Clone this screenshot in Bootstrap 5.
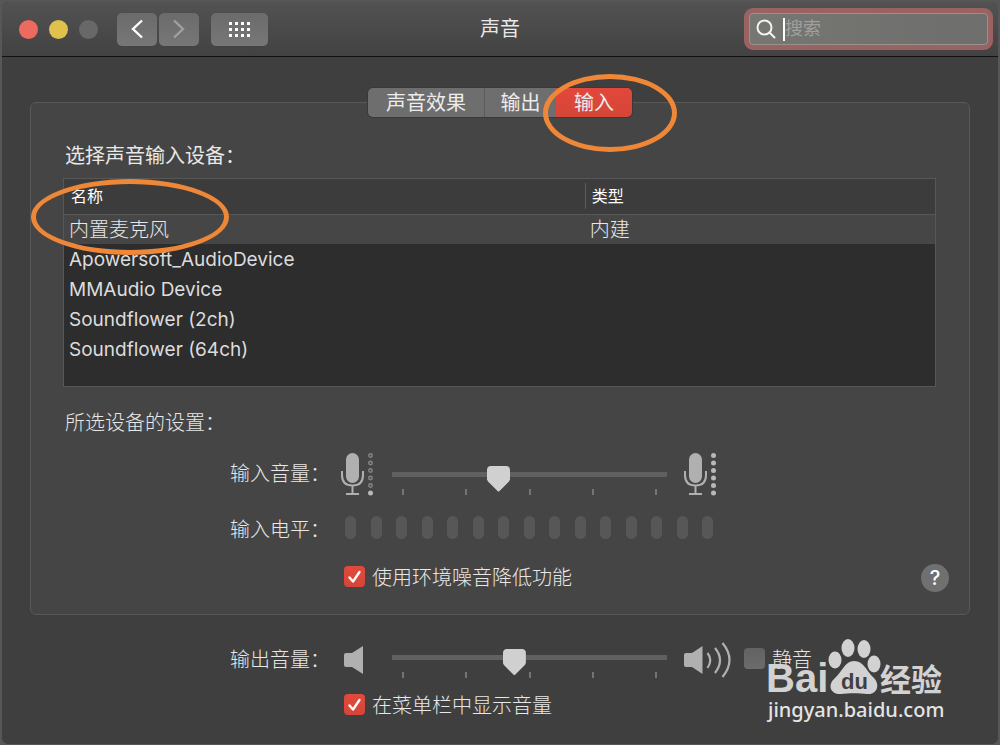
<!DOCTYPE html>
<html lang="zh-CN">
<head>
<meta charset="utf-8">
<meta name="viewport" content="width=device-width, initial-scale=1">
<title>声音</title>
<link href="https://cdn.jsdelivr.net/npm/bootstrap@5.3.0/dist/css/bootstrap.min.css" rel="stylesheet">
<style>
body { background: #575757; color: #e8e8e8; font: 20px/30px Inter, "Noto Sans CJK SC", sans-serif; font-weight: 300; }
.window { border: 2px solid #575757; border-radius: 8px; background: #3f3f3f; overflow: hidden; }
.titlebar { height: 55px; padding: 0 5px; background: linear-gradient(#525252, #424242); border-bottom: 1px solid #111; }
.side { flex: 1 1 0; }
.light { width: 19px; height: 19px; border-radius: 50%; margin-right: 11px; }
.light:first-child { margin-left: 12px; }
.light.close-dot { background: #ed6a5e; }
.light.min-dot { background: #e0c14c; }
.light.max-dot { background: #686868; margin-right: 19px; }
.tool { height: 33px; width: 40px; padding: 0; border: 0; border-radius: 5px; background: linear-gradient(#6b6b6b, #777); display: flex; align-items: center; justify-content: center; margin-right: 2px; }
.tool.wide { width: 57px; margin-left: 10px; }
.search { width: 249px; height: 42px; border: 5px solid #9b6262; border-radius: 9px; background: linear-gradient(90deg, #767672, #6e6e6d); box-shadow: inset 0 0 0 1px #999390; padding-left: 7px; }
.search input { background: none; border: 0; outline: 0; color: #fff; font-size: 18px; padding: 0; min-width: 0; flex: 1; }
.search input::placeholder { color: #a0a09e; opacity: 1; }
.caret { width: 2px; height: 23px; background: #fff; margin-left: 7px; }
main { padding: 31px 28px 23px; }
.tabs { height: 29px; z-index: 1; border-radius: 5px; box-shadow: 0 0 0 1px #393939; }
.tabs button { border: 0; background: #6e6e6e; color: #ececec; padding: 1px 0 0; line-height: 28px; width: 71px; }
.tabs button:first-child { width: 117px; border-right: 1px solid #5b5b5b; border-radius: 5px 0 0 5px; }
.tabs button:last-of-type { width: 76px; border-radius: 0 5px 5px 0; background: linear-gradient(#e2483b, #d44638); }
.ring { position: absolute; border: 5px solid #ef8738; border-radius: 50%; pointer-events: none; }
.ring-tab { left: 175px; top: -14px; width: 134px; height: 78px; }
.ring-device { left: -33px; top: 0; width: 198px; height: 76px; }
.panel { margin-top: -15px; border: 1px solid #585858; border-radius: 6px; background: #454545; padding: 38px 20px 21px; }
h1, h2 { font-size: 20px; line-height: 30px; font-weight: 400; margin: 0; }
h2 { padding-left: 14px; }
h2.dim { font-weight: 300; }
.devices { margin: 7px 13px 21px 12px; border: 1px solid #575757; background: #2d2d2d; min-height: 209px; }
.devices table { width: 100%; table-layout: fixed; border-collapse: separate; border-spacing: 0; }
.devices th { height: 36px; background: #3c3c3c; border-bottom: 1px solid #575757; font-size: 16px; font-weight: 400; color: #fff; padding: 0 7px 2px; }
.devices th:first-child { width: 59.8%; }
.devices th + th span { border-left: 1px solid #5c5c5c; margin-left: -7px; padding-left: 6px; display: block; line-height: 26px; }
.devices td { height: 30px; padding: 1px 5px 0; font-size: 19px; font-weight: 400; line-height: 29px; color: #dcdcdc; }
.devices .chosen td { background: #464646; height: 29px; line-height: 28px; font-size: 20px; font-weight: 300; color: #e8e8e8; }
.controls { display: grid; grid-template-columns: 112px 50px minmax(0, 1fr) 145px; max-width: 582px; margin-left: calc(50% - 270px); align-items: center; }
.controls svg { display: block; }
.input-controls { margin-top: 14px; }
.output-controls { margin-top: 26px; }
.slider { padding-top: 12px; }
.slider.low { padding-top: 7px; }
.slider input { -webkit-appearance: none; appearance: none; display: block; width: 100%; height: 26px; margin: 0; background: linear-gradient(#606060, #606060) 0 6px / 100% 5px no-repeat; }
.slider input::-webkit-slider-thumb { -webkit-appearance: none; width: 23px; height: 26px; border-radius: 4px; background: #d0d0d0; clip-path: polygon(0 2px, 2px 0, 21px 0, 23px 2px, 23px 14px, 22px 16px, 12px 26px, 11px 26px, 1px 16px, 0 14px); }
.ticks { margin-top: -3px; padding: 0 10px; }
.ticks i { width: 2px; height: 6px; background: #747474; }
.meter-row { margin: 20px 0 24px 3px; grid-column: 2 / -1; max-width: 368px; }
.meter-row i { width: 11px; height: 23px; border-radius: 6px; background: #575757; }
.mic-high { margin-left: 18px; }
.output-end { margin-left: 15px; }
.mute { margin-left: 11px; }
.choice { margin-left: calc(50% - 156px); }
.tick-box { appearance: none; width: 21px; height: 21px; margin: 0 7px 3px 0; border: 0; border-radius: 4px; background: linear-gradient(#626262, #6c6c6c); flex: none; }
.tick-box:checked { background: url("data:image/svg+xml,%3Csvg xmlns='http://www.w3.org/2000/svg' viewBox='0 0 21 21'%3E%3Cpath d='M5.500 11.500l3.500 4 6.500-9.500' fill='none' stroke='%23fff' stroke-width='2.4' stroke-linecap='round' stroke-linejoin='round'/%3E%3C/svg%3E"), linear-gradient(#e2493c, #d44638); }
.help { width: 28px; height: 28px; border: 0; border-radius: 50%; background: #707070; color: #fff; font-size: 20px; line-height: 28px; padding: 0; font-weight: 500; }
.menu-row { margin-top: 12px; }
.brand { position: absolute; right: 48px; bottom: 19px; width: 184px; height: 90px; }
</style>
</head>
<body>
<div class="window min-vh-100 position-relative">
  <header class="titlebar d-flex align-items-center">
    <div class="side d-flex align-items-center">
      <span class="light close-dot"></span>
      <span class="light min-dot"></span>
      <span class="light max-dot"></span>
      <button class="tool" type="button" aria-label="后退"><svg width="14" height="20" fill="none" stroke="#fff" stroke-width="2.4"><path d="M12 1.500L3 10l9 8.500"/></svg></button>
      <button class="tool" type="button" aria-label="前进"><svg width="14" height="20" fill="none" stroke="#a0a0a0" stroke-width="2.400"><path d="M2 1.500l9 8.500-9 8.500"/></svg></button>
      <button class="tool wide" type="button" aria-label="显示全部"><svg width="21" height="15" fill="#fff"><defs><pattern id="dots" width="6" height="6" patternUnits="userSpaceOnUse"><rect width="3" height="3"/></pattern></defs><rect width="21" height="15" fill="url(#dots)"/></svg></button>
    </div>
    <h1>声音</h1>
    <div class="side d-flex justify-content-end">
      <label class="search d-flex align-items-center">
        <svg width="20" height="20" fill="none" stroke="#f4f4f4" stroke-width="2"><circle cx="8.500" cy="8.500" r="7"/><path d="M13.500 13.500l5 5" stroke-linecap="round"/></svg>
        <span class="caret"></span>
        <input type="search" placeholder="搜索" aria-label="搜索">
      </label>
    </div>
  </header>
  <main>
    <div class="d-flex justify-content-center">
      <div class="tabs d-flex position-relative">
        <button type="button">声音效果</button><button type="button">输出</button><button type="button">输入</button>
        <span class="ring ring-tab"></span>
      </div>
    </div>
    <section class="panel">
      <h2>选择声音输入设备：</h2>
      <div class="devices position-relative">
        <table>
          <thead><tr><th>名称</th><th><span>类型</span></th></tr></thead>
          <tbody>
            <tr class="chosen"><td>内置麦克风</td><td>内建</td></tr>
            <tr><td>Apowersoft_AudioDevice</td><td></td></tr>
            <tr><td>MMAudio Device</td><td></td></tr>
            <tr><td>Soundflower (2ch)</td><td></td></tr>
            <tr><td>Soundflower (64ch)</td><td></td></tr>
          </tbody>
        </table>
        <span class="ring ring-device"></span>
      </div>
      <h2 class="dim">所选设备的设置：</h2>
      <div class="controls input-controls">
        <label for="gain">输入音量：</label>
        <svg width="34" height="44" viewBox="0 0 34 44" overflow="visible"><g id="mic"><rect x="4" y="1" width="13" height="30" rx="6.500" fill="#b0b0b0"/><path d="M0 19v4c0 7 4 10.500 10.500 10.500s10.500-3.500 10.500-10.500v-4M10.500 33.500v8M4 42h13" fill="none" stroke="#b0b0b0" stroke-width="2"/></g>
          <g fill="none" stroke="#858585" stroke-width="1.500"><circle cx="28.500" cy="3.500" r="1.700"/><circle cx="28.500" cy="11" r="1.700"/><circle cx="28.500" cy="18.500" r="1.700"/><circle cx="28.500" cy="26" r="1.700"/><circle cx="28.500" cy="33.500" r="1.700"/></g><circle cx="28.500" cy="41" r="2.500" fill="#b8b8b8"/></svg>
        <div class="slider">
          <input id="gain" type="range" min="0" max="1000" value="377">
          <div class="ticks d-flex justify-content-between"><i></i><i></i><i></i><i></i><i></i></div>
        </div>
        <svg class="mic-high" width="34" height="44" viewBox="0 0 34 44" overflow="visible"><use href="#mic"/><g fill="#b8b8b8"><circle cx="28.500" cy="3.500" r="2.500"/><circle cx="28.500" cy="11" r="2.500"/><circle cx="28.500" cy="18.500" r="2.500"/><circle cx="28.500" cy="26" r="2.500"/><circle cx="28.500" cy="33.500" r="2.500"/><circle cx="28.500" cy="41" r="2.500"/></g></svg>
        <span>输入电平：</span>
        <div class="meter-row d-flex justify-content-between"><i></i><i></i><i></i><i></i><i></i><i></i><i></i><i></i><i></i><i></i><i></i><i></i><i></i><i></i><i></i></div>
      </div>
      <div class="d-flex align-items-center">
        <label class="choice d-flex align-items-center"><input class="tick-box" type="checkbox" checked>使用环境噪音降低功能</label>
        <button class="help ms-auto" type="button">?</button>
      </div>
    </section>
    <div class="controls output-controls">
      <label for="volume">输出音量：</label>
      <svg width="24" height="28"><path d="M2 9q0-2 2-2h6L21 0v28L10 21H4q-2 0-2-2z" fill="#b0b0b0"/></svg>
      <div class="slider low">
        <input id="volume" type="range" min="0" max="1000" value="440">
        <div class="ticks d-flex justify-content-between"><i></i><i></i><i></i><i></i><i></i></div>
      </div>
      <div class="output-end d-flex align-items-center">
        <svg width="52" height="38"><path d="M2 14q0-2 2-2h6l10.500-7v28L10 26H4q-2 0-2-2z" fill="#b0b0b0"/><path d="M25.500 12q5.500 7 0 15M33 7q10 12 0 25M40.500 2q14 17 0 34" fill="none" stroke="#b0b0b0" stroke-width="2.200"/></svg>
        <label class="mute d-flex align-items-center text-nowrap"><input class="tick-box" type="checkbox">静音</label>
      </div>
    </div>
    <div class="menu-row d-flex">
      <label class="choice d-flex align-items-center"><input class="tick-box" type="checkbox" checked>在菜单栏中显示音量</label>
    </div>
  </main>
  <svg class="brand" viewBox="0 0 184 90" fill="#d2d2d2">
    <text x="0" y="57" font-family="Liberation Sans, sans-serif" font-weight="700" font-size="40">Bai</text>
    <ellipse cx="69" cy="25" rx="6.500" ry="8.500"/><ellipse cx="82" cy="13" rx="6.500" ry="9"/><ellipse cx="98" cy="14" rx="6.500" ry="9"/><ellipse cx="108" cy="29" rx="6.500" ry="8.500"/>
    <path d="M88 26c-9 0-12 11-19 17-9 8-3 17 6 16 7-1 19-1 26 0 9 1 14-8 7-16-7-6-10-17-20-17z"/>
    <text x="75" y="54" font-family="Liberation Sans, sans-serif" font-weight="700" font-size="22" fill="#404040">du</text>
    <text x="114" y="56" font-family="Noto Sans CJK SC, sans-serif" font-weight="700" font-size="31">经验</text>
    <text x="2" y="82" font-family="Noto Sans, sans-serif" font-weight="500" font-size="20" fill="#e4e4e4">jingyan.baidu.com</text>
  </svg>
</div>
<script src="https://cdn.jsdelivr.net/npm/bootstrap@5.3.0/dist/js/bootstrap.bundle.min.js"></script>
</body>
</html>
